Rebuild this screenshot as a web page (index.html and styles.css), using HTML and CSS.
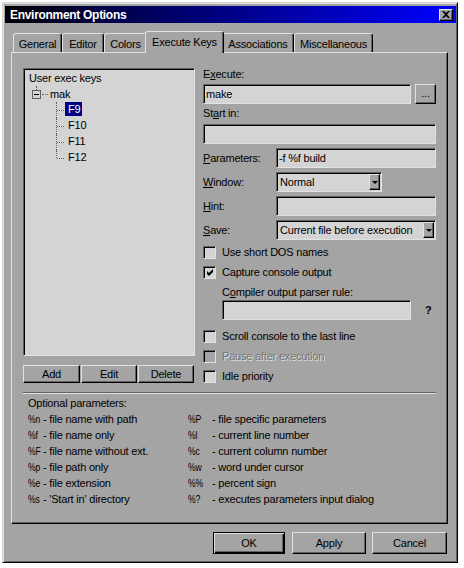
FILE: index.html
```html
<!DOCTYPE html>
<html>
<head>
<meta charset="utf-8">
<link rel="stylesheet" href="styles.css">
</head>
<body>
<div class="window">
  <div class="titlebar">
    <span class="title">Environment Options</span>
    <span class="close"><svg width="8" height="7" viewBox="0 0 8 7"><path d="M0 0h2l2 2 2-2h2L5 3.5 8 7H6L4 5 2 7H0l3-3.5z" fill="#000"/></svg></span>
  </div>
  <div class="tabs">
    <div class="tab t-general">General</div>
    <div class="tab t-editor">Editor</div>
    <div class="tab t-colors">Colors</div>
    <div class="tab t-exec active">Execute Keys</div>
    <div class="tab t-assoc">Associations</div>
    <div class="tab t-misc">Miscellaneous</div>
  </div>
  <div class="panel">
    <div class="top">
      <div class="left-col">
        <div class="tree">
          <div class="node">User exec keys</div>
          <div class="node mak"><span class="expander"><span class="minus"></span></span><span class="hdots"></span><span>mak</span></div>
          <ul class="children">
            <li><span class="leaf sel">F9</span></li>
            <li><span class="leaf">F10</span></li>
            <li><span class="leaf">F11</span></li>
            <li><span class="leaf">F12</span></li>
          </ul>
        </div>
        <div class="tree-buttons">
          <div class="btn b-add">Add</div>
          <div class="btn b-edit">Edit</div>
          <div class="btn b-del">Delete</div>
        </div>
      </div>
      <div class="form">
        <div class="lbl">E<u>x</u>ecute:</div>
        <div class="exec-row">
          <div class="field grow">make</div>
          <div class="btn dots">...</div>
        </div>
        <div class="lbl start-lbl">St<u>a</u>rt in:</div>
        <div class="field start-field"></div>
        <div class="lrow">
          <div class="lbl lw"><u>P</u>arameters:</div>
          <div class="field fw">-f %f build</div>
        </div>
        <div class="lrow">
          <div class="lbl lw"><u>W</u>indow:</div>
          <div class="field select sw"><span>Normal</span><span class="ddbtn"><span class="arrow"></span></span></div>
        </div>
        <div class="lrow">
          <div class="lbl lw"><u>H</u>int:</div>
          <div class="field fw"></div>
        </div>
        <div class="lrow">
          <div class="lbl lw"><u>S</u>ave:</div>
          <div class="field select fw"><span>Current file before execution</span><span class="ddbtn"><span class="arrow"></span></span></div>
        </div>
        <div class="cb-row first-cb"><span class="cb"></span><span>Use short DOS names</span></div>
        <div class="cb-row"><span class="cb"><svg width="7" height="7" viewBox="0 0 7 7"><path d="M0 2L2 4L6 0V3L2 7L0 5Z" fill="#000"/></svg></span><span>Capture console output</span></div>
        <div class="sub-lbl">C<u>o</u>mpiler output parser rule:</div>
        <div class="sub-row"><div class="field parser"></div><span class="qmark">?</span></div>
        <div class="cb-row gap-cb"><span class="cb"></span><span>Scroll console to the last line</span></div>
        <div class="cb-row disabled"><span class="cb"></span><span>Pause after execution</span></div>
        <div class="cb-row"><span class="cb"></span><span>Idle priority</span></div>
      </div>
    </div>
    <div class="sep"></div>
    <div class="params">
      <div class="ph">Optional parameters:</div>
      <span class="k">%n</span><span>- file name with path</span><span class="k">%P</span><span>- file specific parameters</span>
      <span class="k">%f</span><span>- file name only</span><span class="k">%l</span><span>- current line number</span>
      <span class="k">%F</span><span>- file name without ext.</span><span class="k">%c</span><span>- current column number</span>
      <span class="k">%p</span><span>- file path only</span><span class="k">%w</span><span>- word under cursor</span>
      <span class="k">%e</span><span>- file extension</span><span class="k">%%</span><span>- percent sign</span>
      <span class="k">%s</span><span>- 'Start in' directory</span><span class="k">%?</span><span>- executes parameters input dialog</span>
    </div>
  </div>
  <div class="dlg-buttons">
    <div class="btn default b-ok">OK</div>
    <div class="btn b-apply">Apply</div>
    <div class="btn b-cancel">Cancel</div>
  </div>
</div>
</body>
</html>
```

FILE: styles.css
```css
:root {
  --face: #a4a4a4;
  --light: #d4d4d4;
  --hi: #e2e2e2;
  --shadow: #626262;
}
* { box-sizing: border-box; }
body {
  margin: 0;
  background: #ffffff;
  font-family: "Liberation Sans", Arial, sans-serif;
  font-size: 11px;
  letter-spacing: -0.2px;
  color: #000;
}
.window {
  margin: 2px 0 0 2px;
  width: 456px;
  height: 561px;
  background: var(--face);
  border: 1px solid;
  border-color: var(--light) #000 #000 var(--light);
  box-shadow: inset 1px 1px 0 var(--hi), inset -1px -1px 0 var(--shadow);
  padding: 3px 1px 0 2px;
  display: flex;
  flex-direction: column;
}
.titlebar {
  height: 17px;
  flex: none;
  background: linear-gradient(to right, #000 0%, #000040 20%, #0000ff 100%);
  display: flex;
  align-items: center;
  justify-content: space-between;
  padding: 0 3px 0 5px;
  color: #fff;
  font-weight: bold;
  font-size: 12px;
  letter-spacing: -0.3px;
}
.close {
  width: 14px;
  height: 12px;
  background: var(--face);
  border: 1px solid;
  border-color: var(--hi) #000 #000 var(--hi);
  box-shadow: inset -1px -1px 0 var(--shadow);
  display: flex;
  align-items: center;
  justify-content: center;
}
.close svg { display: block; }

.tabs {
  display: flex;
  align-items: flex-end;
  height: 21px;
  flex: none;
  margin: 8px 0 0 8px;
  position: relative;
  z-index: 2;
}
.tab {
  height: 19px;
  border: 1px solid;
  border-bottom: none;
  border-color: var(--hi) #000 transparent var(--hi);
  border-radius: 3px 3px 0 0;
  box-shadow: inset -1px 0 0 var(--shadow);
  display: flex;
  align-items: center;
  justify-content: center;
  padding-top: 1px;
  background: var(--face);
}
.t-general { width: 49px; }
.t-editor { width: 42px; }
.t-colors { width: 43px; }
.t-exec { width: 79px; }
.t-assoc { width: 72px; }
.t-misc { width: 79px; }
.tab.active {
  height: 22px;
  margin: 0 -2px -1px -2px;
  position: relative;
  z-index: 3;
  padding-top: 0;
  padding-bottom: 1px;
}

.panel {
  margin-left: 6px;
  width: 437px;
  height: 472px;
  flex: none;
  border: 1px solid;
  border-color: var(--hi) #000 #000 var(--hi);
  box-shadow: inset -1px -1px 0 var(--shadow);
  padding: 13px 11px 0 11px;
  position: relative;
  z-index: 1;
}
.top {
  display: flex;
  gap: 8px;
  height: 320px;
}
.left-col { width: 172px; flex: none; }
.form { width: 233px; flex: none; }

.field {
  height: 20px;
  background: var(--light);
  border: 1px solid;
  border-color: var(--shadow) var(--hi) var(--hi) var(--shadow);
  box-shadow: inset 1px 1px 0 #000;
  display: flex;
  align-items: center;
  padding: 0 1px 0 2px;
  white-space: nowrap;
}
.btn {
  background: var(--face);
  border: 1px solid;
  border-color: var(--hi) #000 #000 var(--hi);
  box-shadow: inset -1px -1px 0 var(--shadow);
  display: flex;
  align-items: center;
  justify-content: center;
}

.tree {
  margin-top: 2px;
  height: 288px;
  background: var(--light);
  border: 1px solid;
  border-color: var(--shadow) var(--hi) var(--hi) var(--shadow);
  box-shadow: inset 1px 1px 0 #000;
  padding: 1px 0 0 5px;
}
.node { height: 16px; line-height: 16px; display: flex; align-items: center; }
.mak { padding-left: 3px; }
.expander {
  width: 9px;
  height: 9px;
  border: 1px solid var(--shadow);
  background: var(--light);
  position: relative;
  display: flex;
  align-items: center;
  justify-content: center;
  flex: none;
}
.expander::before {
  content: "";
  position: absolute;
  left: 3px;
  top: -5px;
  height: 4px;
  border-left: 1px dotted var(--shadow);
}
.minus { width: 5px; height: 1px; background: #000; }
.hdots {
  width: 6px;
  margin: 0 2px 0 1px;
  border-top: 1px dotted var(--shadow);
}
.children {
  list-style: none;
  margin: 0 0 0 27px;
  padding: 0;
}
.children li {
  position: relative;
  height: 16px;
  line-height: 16px;
  padding-left: 9px;
}
.children li::before {
  content: "";
  position: absolute;
  left: 0;
  top: 0;
  height: 16px;
  border-left: 1px dotted var(--shadow);
}
.children li:last-child::before { height: 8px; }
.children li::after {
  content: "";
  position: absolute;
  left: 1px;
  top: 8px;
  width: 7px;
  border-top: 1px dotted var(--shadow);
}
.leaf {
  display: inline-block;
  line-height: 14px;
  padding: 0 2px 0 3px;
  vertical-align: 1px;
}
.leaf.sel { background: #000080; color: #fff; }

.tree-buttons {
  display: flex;
  gap: 1px;
  margin-top: 9px;
}
.tree-buttons .btn { height: 18px; }
.b-add { width: 57px; }
.b-edit { width: 56px; }
.b-del { width: 56px; }

.lbl { height: 16px; line-height: 16px; white-space: nowrap; }
.exec-row { display: flex; gap: 4px; margin-top: 2px; }
.grow { flex: 1; }
.dots { width: 21px; height: 20px; align-items: flex-end; padding-bottom: 4px; }
.start-lbl { margin-top: 1px; }
.start-field { margin-top: 3px; }
.lrow { display: flex; align-items: center; margin-top: 4px; height: 20px; }
.lw { width: 73px; flex: none; }
.fw { width: 160px; flex: none; }
.sw { width: 106px; flex: none; }
.select { justify-content: space-between; padding: 0 1px 0 3px; }
.ddbtn {
  width: 11px;
  height: 16px;
  background: var(--face);
  border: 1px solid;
  border-color: var(--hi) #000 #000 var(--hi);
  box-shadow: inset -1px -1px 0 var(--shadow);
  display: flex;
  align-items: center;
  justify-content: center;
  flex: none;
}
.arrow {
  width: 0;
  height: 0;
  border-left: 3px solid transparent;
  border-right: 3px solid transparent;
  border-top: 3px solid #000;
}
.cb-row {
  display: flex;
  align-items: center;
  gap: 6px;
  height: 20px;
  white-space: nowrap;
}
.first-cb { margin-top: 2px; }
.gap-cb { margin-top: 6px; }
.cb {
  width: 13px;
  height: 13px;
  flex: none;
  background: var(--light);
  border: 1px solid;
  border-color: var(--shadow) var(--hi) var(--hi) var(--shadow);
  box-shadow: inset 1px 1px 0 #000;
  display: flex;
  align-items: center;
  justify-content: center;
  padding: 1px 0 0 1px;
}
.cb svg { display: block; }
.disabled .cb { background: var(--face); }
.disabled span:last-child {
  color: #747474;
  text-shadow: 1px 1px 0 var(--hi);
}
.sub-lbl {
  margin-top: 2px;
  padding-left: 19px;
  height: 16px;
  line-height: 16px;
}
.sub-row { display: flex; align-items: center; padding-left: 19px; }
.parser { width: 189px; flex: none; }
.qmark { margin-left: 14px; font-weight: bold; }

.sep {
  margin-top: 6px;
  width: 413px;
  height: 2px;
  border-top: 1px solid var(--shadow);
  border-bottom: 1px solid var(--hi);
}
.params {
  margin-top: 1px;
  padding-left: 5px;
  display: grid;
  grid-template-columns: 15px 145px 24px auto;
  line-height: 16px;
  white-space: nowrap;
}
.params .k {
  display: inline-block;
  transform: scaleX(0.78);
  transform-origin: left center;
}
.ph { grid-column: 1 / -1; }

.dlg-buttons {
  display: flex;
  justify-content: flex-end;
  margin-top: 8px;
  padding-right: 9px;
}
.dlg-buttons .btn { height: 22px; }
.b-ok { width: 72px; }
.b-apply { width: 74px; margin-left: 7px; }
.b-cancel { width: 75px; margin-left: 6px; }
.btn.default {
  border: 1px solid #000;
  box-shadow: inset 1px 1px 0 var(--hi), inset -1px -1px 0 #000, inset -2px -2px 0 var(--shadow);
}
```
